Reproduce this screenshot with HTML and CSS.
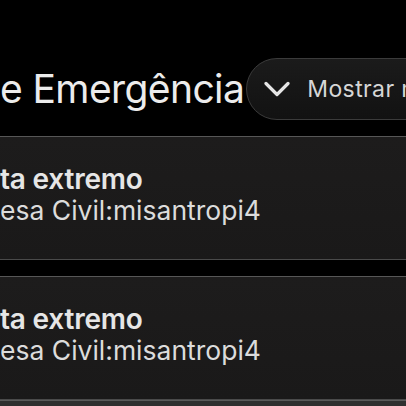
FILE: index.html
```html
<!DOCTYPE html>
<html lang="pt">
<head>
<meta charset="utf-8">
<title>Alertas de Emergência</title>
<link rel="stylesheet" href="styles.css">
</head>
<body>
<main class="stack">
  <header class="group-head">
    <h1 class="group-title">e Emergência</h1>
    <button class="toggle" type="button">
      <svg class="chev" width="26" height="16" viewBox="0 0 26 16" aria-hidden="true">
        <path d="M2 2.5 L13 13.5 L24 2.5" fill="none" stroke="#e6e6e6" stroke-width="3.2" stroke-linecap="round" stroke-linejoin="round"/>
      </svg>
      <span class="toggle-label">Mostrar menos</span>
    </button>
  </header>
  <article class="alert">
    <h2 class="alert-title">ta extremo</h2>
    <p class="alert-body">esa Civil:misantropi4</p>
  </article>
  <article class="alert">
    <h2 class="alert-title">ta extremo</h2>
    <p class="alert-body">esa Civil:misantropi4</p>
  </article>
  <div class="alert-peek"></div>
</main>
</body>
</html>
```

FILE: styles.css
```css
html, body {
  margin: 0;
  padding: 0;
  background: #000;
  width: 406px;
  height: 406px;
  overflow: hidden;
}

.stack {
  display: flex;
  flex-direction: column;
  gap: 16px;
  padding-top: 58px;
  font-family: Inter, "Liberation Sans", sans-serif;
}

.group-head {
  display: flex;
  align-items: center;
  gap: 2px;
  height: 62px;
  white-space: nowrap;
}

.group-title {
  margin: 0;
  flex: 0 0 auto;
  font-size: 39px;
  font-weight: 400;
  letter-spacing: -0.6px;
  color: #ececec;
  line-height: 62px;
}

.toggle {
  flex: 0 0 auto;
  display: flex;
  align-items: center;
  gap: 17px;
  height: 62px;
  box-sizing: border-box;
  padding: 0 24px 0 17px;
  border: 1px solid #3b3b3b;
  border-radius: 31px;
  background: linear-gradient(180deg, #1b1b1b 0%, #121212 100%);
  color: #d6d6d6;
  font-family: inherit;
  font-size: 23px;
  letter-spacing: 0.4px;
}

.chev {
  display: block;
  flex: 0 0 auto;
}

.alert {
  box-sizing: border-box;
  height: 124px;
  width: 480px;
  margin-left: -30px;
  padding: 27px 0 0 30px;
  border-top: 1px solid #575757;
  border-bottom: 1px solid #4a4a4a;
  background: linear-gradient(180deg, #1d1c1c 0%, #1a1919 100%);
  color: #e6e6e6;
  white-space: nowrap;
}

.alert-title {
  margin: 0;
  font-size: 28px;
  font-weight: 600;
  line-height: 31px;
  letter-spacing: -0.2px;
}

.alert-body {
  margin: 0;
  font-size: 26.5px;
  font-weight: 400;
  line-height: 31px;
  color: #dcdcdc;
  letter-spacing: 0;
}

.alert-peek {
  margin-top: -16px;
  height: 20px;
  background: #2f2f2f;
  border-top: 1px solid #5a5a5a;
}
```
